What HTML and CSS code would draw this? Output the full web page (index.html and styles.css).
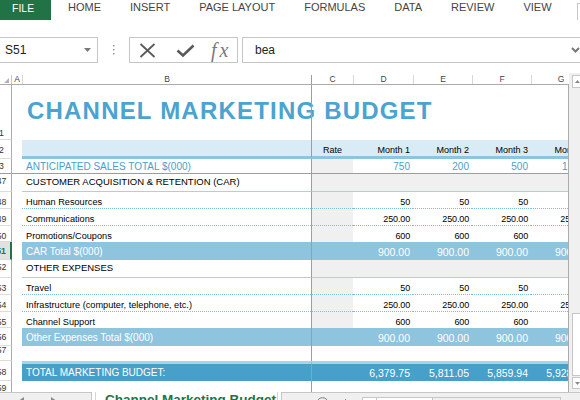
FILE: index.html
```html
<!DOCTYPE html>
<html lang="en">
<head>
<meta charset="utf-8">
<title>Channel Marketing Budget</title>
<link rel="stylesheet" href="styles.css">
</head>
<body>
<div class="ribbon">
  <div class="file">FILE</div>
  <nav class="tabs">
    <span>HOME</span><span>INSERT</span><span>PAGE LAYOUT</span><span>FORMULAS</span><span>DATA</span><span>REVIEW</span><span>VIEW</span>
  </nav>
  <div class="account"></div>
</div>

<div class="fbar">
  <div class="namebox">
    <span>S51</span>
    <svg class="nb-arrow" width="7" height="4" viewBox="0 0 7 4"><path d="M0 0H7L3.5 4Z" fill="#7a7a7a"/></svg>
  </div>
  <div class="grip">
    <svg width="2" height="10" viewBox="0 0 2 10"><rect x="0" y="0" width="1.5" height="1.5" fill="#9a9a9a"/><rect x="0" y="4" width="1.5" height="1.5" fill="#9a9a9a"/><rect x="0" y="8" width="1.5" height="1.5" fill="#9a9a9a"/></svg>
  </div>
  <div class="fxbox">
    <svg class="ico-x" width="17" height="15" viewBox="0 0 17 15"><path d="M1.5 1L15.5 14M15.5 1L1.5 14" stroke="#5a5a5a" stroke-width="1.8" fill="none"/></svg>
    <svg class="ico-check" width="19" height="13" viewBox="0 0 19 13"><path d="M1.5 6.5L7 11.5L17.5 1.5" stroke="#5a5a5a" stroke-width="2.6" fill="none"/></svg>
    <span class="fx">fx</span>
  </div>
  <div class="input">
    <span>bea</span>
    <svg class="chev" width="9" height="6" viewBox="0 0 9 6"><path d="M1 1L4.5 4.5L8 1" stroke="#777" stroke-width="2" fill="none"/></svg>
  </div>
</div>

<div class="sheetwrap">
  <div class="sheet">
    <div class="grid colhdr">
      <div class="corner"><svg width="5" height="5" viewBox="0 0 5 5"><path d="M5 0V5H0Z" fill="#b4b4b4"/></svg></div>
      <div class="ch first">A</div>
      <div class="ch">B</div>
      <div class="ch fz">C</div>
      <div class="ch">D</div>
      <div class="ch">E</div>
      <div class="ch">F</div>
      <div class="ch">G</div>
    </div>

    <div class="body">
      <div class="grid row r-title">
        <div class="rn">1</div><div class="a"></div>
        <div class="b title">CHANNEL MARKETING BUDGET</div>
        <div class="c"></div><div class="n"></div><div class="n"></div><div class="n"></div><div class="n"></div>
      </div>

      <div class="grid row r-head">
        <div class="rn">2</div><div class="a"></div>
        <div class="b"></div>
        <div class="c ctr">Rate</div><div class="n">Month 1</div><div class="n">Month 2</div><div class="n">Month 3</div><div class="n">Month 4</div>
      </div>

      <div class="grid row r-sales">
        <div class="rn">3</div><div class="a"></div>
        <div class="b">ANTICIPATED SALES TOTAL $(000)</div>
        <div class="c"></div><div class="n">750</div><div class="n">200</div><div class="n">500</div><div class="n">1,000</div>
      </div>

      <div class="grid row r-sec">
        <div class="rn">47</div><div class="a"></div>
        <div class="b">CUSTOMER ACQUISITION &amp; RETENTION (CAR)</div>
        <div class="c"></div><div class="n"></div><div class="n"></div><div class="n"></div><div class="n"></div>
      </div>

      <div class="grid row r-item dot">
        <div class="rn">48</div><div class="a"></div>
        <div class="b">Human Resources</div>
        <div class="c"></div><div class="n">50</div><div class="n">50</div><div class="n">50</div><div class="n">50</div>
      </div>

      <div class="grid row r-item dot">
        <div class="rn">49</div><div class="a"></div>
        <div class="b">Communications</div>
        <div class="c"></div><div class="n">250.00</div><div class="n">250.00</div><div class="n">250.00</div><div class="n">250.00</div>
      </div>

      <div class="grid row r-item">
        <div class="rn">50</div><div class="a"></div>
        <div class="b">Promotions/Coupons</div>
        <div class="c"></div><div class="n">600</div><div class="n">600</div><div class="n">600</div><div class="n">600</div>
      </div>

      <div class="grid row r-total">
        <div class="rn sel">51</div><div class="a"></div>
        <div class="b">CAR Total $(000)</div>
        <div class="c"></div><div class="n">900.00</div><div class="n">900.00</div><div class="n">900.00</div><div class="n">900.00</div>
      </div>

      <div class="grid row r-sec">
        <div class="rn">52</div><div class="a"></div>
        <div class="b">OTHER EXPENSES</div>
        <div class="c"></div><div class="n"></div><div class="n"></div><div class="n"></div><div class="n"></div>
      </div>

      <div class="grid row r-item dot">
        <div class="rn">53</div><div class="a"></div>
        <div class="b">Travel</div>
        <div class="c"></div><div class="n">50</div><div class="n">50</div><div class="n">50</div><div class="n">50</div>
      </div>

      <div class="grid row r-item dot">
        <div class="rn">54</div><div class="a"></div>
        <div class="b">Infrastructure (computer, telephone, etc.)</div>
        <div class="c"></div><div class="n">250.00</div><div class="n">250.00</div><div class="n">250.00</div><div class="n">250.00</div>
      </div>

      <div class="grid row r-item">
        <div class="rn">55</div><div class="a"></div>
        <div class="b">Channel Support</div>
        <div class="c"></div><div class="n">600</div><div class="n">600</div><div class="n">600</div><div class="n">600</div>
      </div>

      <div class="grid row r-total">
        <div class="rn">56</div><div class="a"></div>
        <div class="b">Other Expenses Total $(000)</div>
        <div class="c"></div><div class="n">900.00</div><div class="n">900.00</div><div class="n">900.00</div><div class="n">900.00</div>
      </div>

      <div class="grid row r-blank">
        <div class="rn">57</div><div class="a"></div>
        <div class="b"></div>
        <div class="c"></div><div class="n"></div><div class="n"></div><div class="n"></div><div class="n"></div>
      </div>

      <div class="grid row r-grand">
        <div class="rn">58</div><div class="a"></div>
        <div class="b">TOTAL MARKETING BUDGET:</div>
        <div class="c"></div><div class="n">6,379.75</div><div class="n">5,811.05</div><div class="n">5,859.94</div><div class="n">5,928.71</div>
      </div>

      <div class="grid row r-end">
        <div class="rn">59</div><div class="a"></div>
        <div class="b"></div>
        <div class="c"></div><div class="n"></div><div class="n"></div><div class="n"></div><div class="n"></div>
      </div>
    </div>
  </div>

  <div class="vscroll">
    <div class="vbtn"><svg width="5" height="3" viewBox="0 0 5 3"><path d="M0 3H5L2.5 0Z" fill="#8a8a8a"/></svg></div>
    <div class="vthumb"></div>
    <div class="vbtn down"><svg width="5" height="3" viewBox="0 0 5 3"><path d="M0 0H5L2.5 3Z" fill="#8a8a8a"/></svg></div>
  </div>
</div>

<div class="statusbar">
  <div class="nav">
    <svg width="5" height="7" viewBox="0 0 5 7"><path d="M5 0V7L0 3.5Z" fill="#8a8a8a"/></svg>
    <svg width="5" height="7" viewBox="0 0 5 7"><path d="M0 0V7L5 3.5Z" fill="#8a8a8a"/></svg>
  </div>
  <div class="sheettab">Channel Marketing Budget</div>
  <div class="rest">
    <svg class="addsheet" width="13" height="13" viewBox="0 0 13 13"><circle cx="6.5" cy="6.5" r="5.8" stroke="#7a7a7a" stroke-width="1" fill="none"/><path d="M6.5 3.5V9.5M3.5 6.5H9.5" stroke="#7a7a7a" stroke-width="1"/></svg>
    <div class="tick"></div>
    <div class="hscroll"><div class="harrow"></div><div class="hthumb"></div></div>
  </div>
</div>
</body>
</html>
```

FILE: styles.css
```css
* { box-sizing: border-box; }
html, body { margin: 0; padding: 0; }
body {
  width: 580px;
  height: 400px;
  overflow: hidden;
  background: #fff;
  font-family: "Liberation Sans", Arial, sans-serif;
  color: #000;
}

/* Ribbon tabs */
.ribbon { display: flex; height: 20px; overflow: hidden; }
.file {
  width: 51px; flex: none;
  background: #217346; color: #fff;
  font-size: 10.5px; line-height: 1;
  padding: 2.8px 0 0 12px;
}
.tabs {
  display: flex; gap: 29px;
  margin-left: 17px; padding-top: 2.4px;
  font-size: 11px; line-height: 1; color: #444;
  white-space: nowrap;
}
.account {
  flex: none; margin-left: auto;
  width: 3px; height: 17px; margin-top: 3px;
  border-left: 1px solid #c6c6c6; border-top: 1px solid #c6c6c6;
}

/* Formula bar */
.fbar { display: flex; height: 26px; margin-top: 17px; }
.namebox {
  flex: none; width: 99px; margin-left: -1px;
  border: 1px solid #c6c6c6;
  display: flex; align-items: center;
  padding-left: 5px;
  font-size: 12px; color: #222;
}
.nb-arrow { margin-left: auto; margin-right: 6px; }
.grip { flex: none; width: 31px; display: flex; align-items: center; justify-content: center; }
.fxbox {
  flex: none; width: 109px;
  border: 1px solid #c6c6c6;
  display: flex; align-items: center;
  padding-left: 9px;
}
.ico-x { margin-right: 20px; }
.ico-check { margin-right: 16px; margin-top: 1px; }
.fx {
  font: italic 20px "Liberation Serif", "Times New Roman", serif;
  color: #7a7a7a; letter-spacing: 3px; line-height: 1;
  margin-top: -1px;
}
.input {
  flex: 1; margin-left: 4px; margin-right: -1px;
  border: 1px solid #c6c6c6;
  display: flex; align-items: center;
  padding-left: 12px;
  font-size: 12px; color: #222;
}
.chev { margin-left: auto; }

/* Sheet */
.sheetwrap { display: flex; height: 319px; margin-top: 10px; }
.sheet { width: 569px; flex: none; display: flex; flex-direction: column; overflow: hidden; }
.grid {
  display: grid;
  grid-template-columns: 20px 10px 289px 42px 60px 59px 59px 59px;
  margin-left: -8px;
}
.colhdr {
  height: 12px; flex: none;
  border-bottom: 1px solid #ababab;
  font-size: 8.5px; line-height: 1; color: #444;
}
.corner {
  border-right: 1px solid #c6c6c6;
  margin-top: 2px;
  padding: 3px 0 0 12px;
  display: flex;
}
.ch { text-align: center; margin-top: 2px; border-left: 1px solid #d8d8d8; }
.ch.first { border-left: none; }
.ch.fz { border-left-color: #9e9e9e; }

.body { flex: 1; border-right: 1px solid #ababab; overflow: hidden; }

.row > div { line-height: 1; white-space: nowrap; }
.rn {
  text-align: center;
  font-size: 8.7px; color: #333;
  border-right: 1px solid #ababab;
  border-bottom: 1px solid #dcdcdc;
}
.rn.sel {
  background: #e1e1e1;
  color: #217346; font-weight: bold;
  border-right: 2px solid #217346;
}
.b { padding-left: 4px; font-size: 9.2px; }
.c { border-left: 1px solid #9e9e9e; font-size: 9px; }
.ctr { text-align: center; }
.n { text-align: right; padding-right: 3px; font-size: 9px; letter-spacing: -0.15px; }

/* Title row */
.r-title { height: 55px; }
.r-title > .rn {
  display: flex; align-items: flex-end; justify-content: center;
  padding-bottom: 1.7px;
}
.r-title > .title {
  padding: 14px 0 0 5px;
  font-weight: bold; font-size: 24px; letter-spacing: 1.2px;
  color: #4ba3cf;
}

/* Header band row */
.r-head { height: 19px; }
.r-head > div { padding-top: 6px; }
.r-head > .b, .r-head > .c, .r-head > .n {
  background: #d9ebf4;
  border-bottom: 3px solid #8fc4df;
}
.r-head > .n { letter-spacing: 0; }

/* Anticipated sales row */
.r-sales { height: 15px; }
.r-sales > div { padding-top: 2.5px; border-bottom: 1px solid #9e9e9e; }
.r-sales > .b, .r-sales > .n { color: #4aa0cd; font-size: 10px; letter-spacing: 0; }
.r-sales > .c { background: #f0f0f0; }

/* Section header rows */
.r-sec { height: 18px; }
.r-sec > div { padding-top: 3.3px; }
.r-sec > .b { font-size: 9.5px; }
.r-sec > .c, .r-sec > .n { background: #f0f0f0; }
.r-sec > .b, .r-sec > .c, .r-sec > .n { border-bottom: 1px solid #a9d1e6; }

/* Item rows */
.r-item { height: 16px; }
.r-item.dot { height: 17px; }
.r-item > div { padding-top: 5.5px; }
.r-item > .c { background: #f0f0f0; }
.dot > .b, .dot > .c, .dot > .n { border-bottom: 1px dotted #7fbcd9; }

/* Sub-total rows */
.r-total { height: 18px; }
.r-total > div { padding-top: 4.5px; }
.r-total > .b, .r-total > .c, .r-total > .n { background: #8fc4df; color: #fff; }
.r-total > .b { font-size: 10px; }
.r-total > .n { font-size: 10.5px; letter-spacing: 0; }

.r-blank { height: 15px; }

/* Grand total */
.r-grand { height: 20px; }
.r-grand > div { padding-top: 4px; }
.r-grand > .rn { padding-top: 7px; }
.r-grand > .b, .r-grand > .c, .r-grand > .n {
  background: #47a0ca; color: #fff;
  border-top: 3px solid #aad3e8;
}
.r-grand > .b { font-size: 10px; }
.r-grand > .n { font-size: 10.5px; letter-spacing: 0; }

.r-end { height: 12px; }
.r-end > div { padding-top: 3px; }

/* Vertical scrollbar */
.vscroll {
  flex: 1; background: #f0f0f0;
  display: flex; flex-direction: column;
  padding: 2px 0 3px 3px;
  overflow: hidden;
}
.vbtn {
  height: 13px; margin-right: -2px;
  border: 1px solid #c6c6c6; background: #fff;
  display: flex; justify-content: center; align-items: center;
}
.vbtn.down { height: 12px; margin-top: 1px; }
.vthumb {
  margin-top: auto; height: 63px; margin-right: -2px;
  border: 1px solid #c6c6c6; background: #fff;
}

/* Bottom sheet-tab bar */
.statusbar { display: flex; height: 22px; }
.nav {
  flex: none; width: 92px;
  background: #f0f0f0;
  border-top: 1px solid #c6c6c6; border-right: 1px solid #c6c6c6;
  display: flex; gap: 27px; align-items: flex-start;
  padding: 4px 0 0 19px;
}
.sheettab {
  flex: none; width: 183px; margin-left: 3px;
  background: #fff;
  border-left: 1px solid #d4d4d4; border-right: 1px solid #d4d4d4;
  color: #217346; font-weight: bold; font-size: 13.5px; line-height: 1;
  padding: 1px 0 0 9px;
  white-space: nowrap; overflow: hidden;
}
.rest {
  flex: 1; margin-left: 3px;
  background: #f0f0f0;
  border-top: 1px solid #c6c6c6; border-left: 1px solid #c6c6c6;
  display: flex; align-items: flex-start;
  padding-top: 4px;
}
.addsheet { margin-left: 34px; }
.tick { width: 1px; height: 4px; background: #8a8a8a; margin: 2px 0 0 16px; }
.hscroll {
  display: flex;
  margin-left: 16px; width: 199px; height: 14px;
  border: 1px solid #c6c6c6; background: #f0f0f0;
}
.harrow { width: 14px; border-right: 1px solid #c6c6c6; background: #fff; }
.hthumb { width: 56px; border-right: 1px solid #c6c6c6; background: #fff; }
```
